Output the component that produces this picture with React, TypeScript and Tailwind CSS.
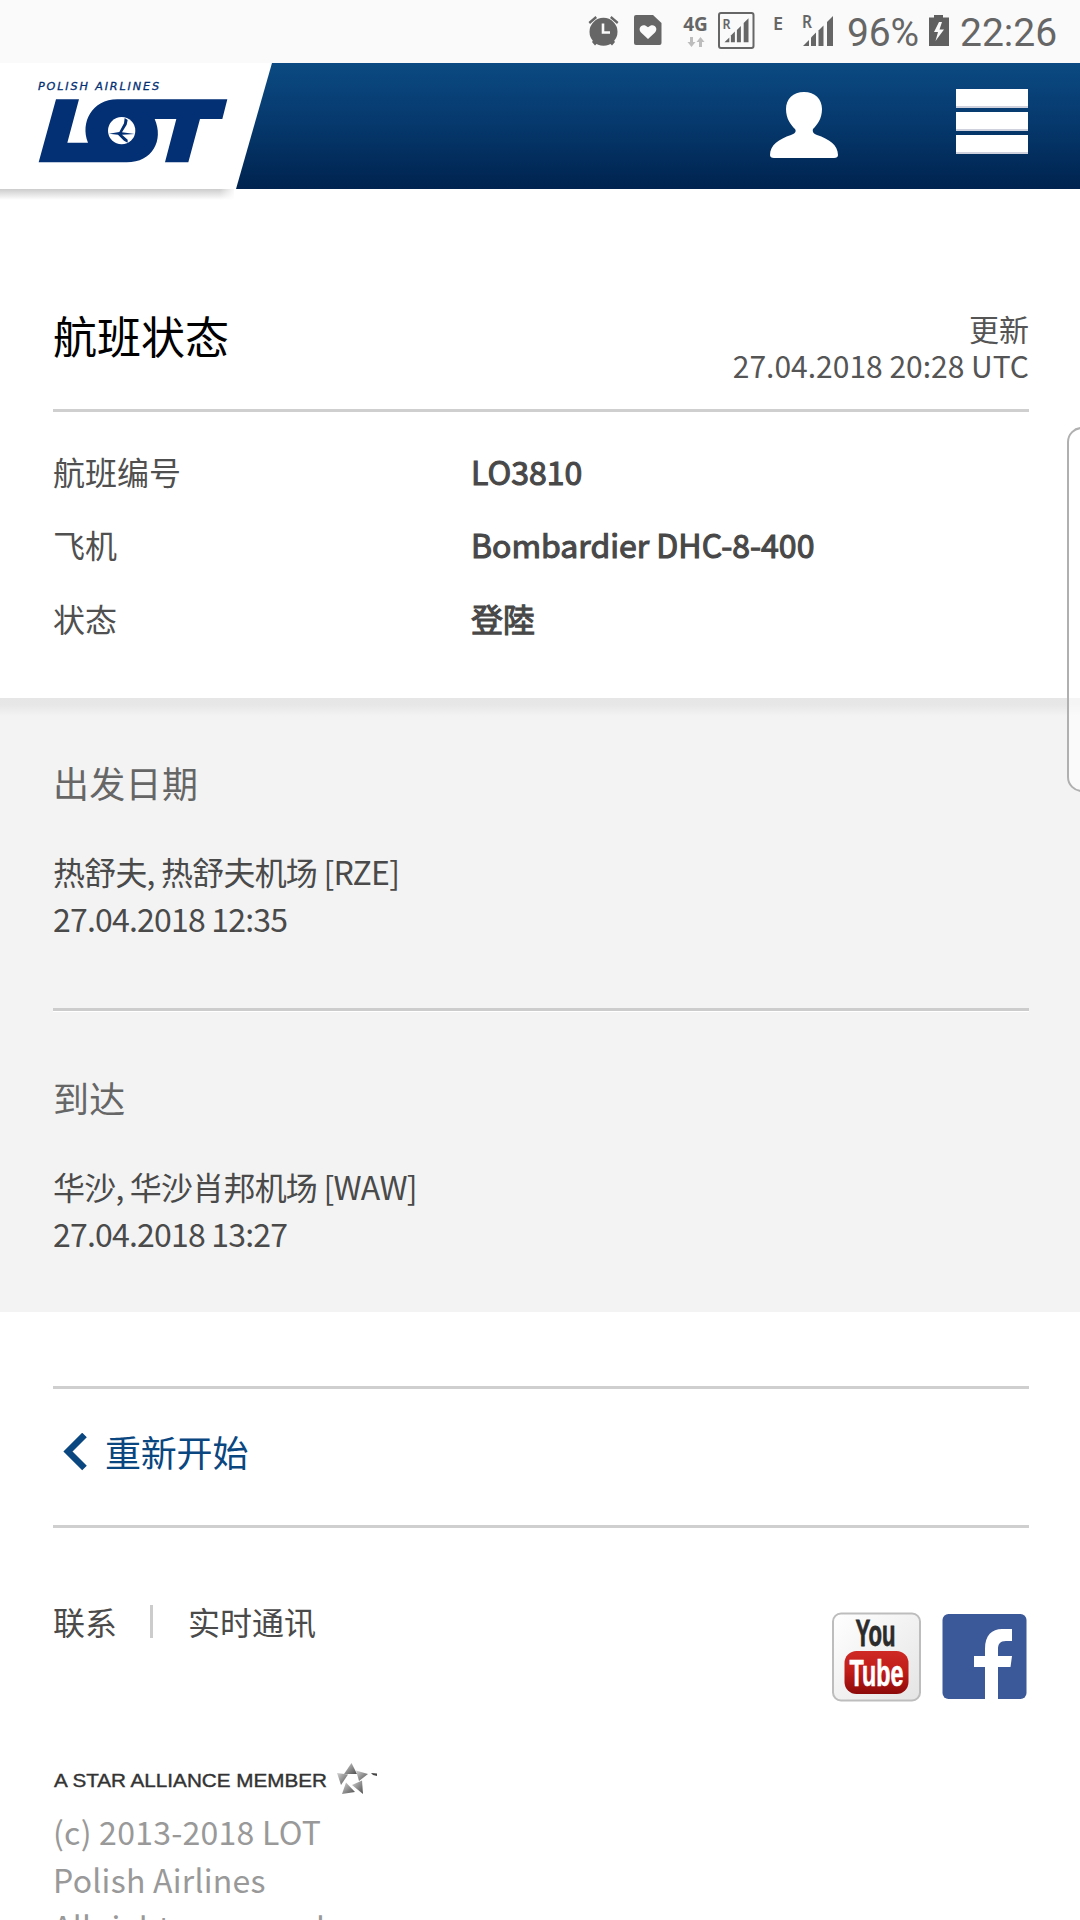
import React from "react";

const CJK = "font-['Noto_Sans_CJK_SC',sans-serif]";

function SignalBars() {
  return (
    <g>
      <path d="M0 31 L6 25 V31 Z" />
      <path d="M8 22.500 L13 17.500 V31 H8 Z" />
      <path d="M15.500 15.500 L20.500 10.500 V31 H15.500 Z" />
      <path d="M24 7 L30 1 V31 H24 Z" />
    </g>
  );
}

function StatusBar() {
  return (
    <div className="flex h-[63px] items-start justify-end bg-[#fafafa] pr-[22px] text-[#666666]">
      <svg className="mt-[14px] h-[33px] w-[33px] shrink-0" viewBox="0 0 33 33" fill="#666666">
        <path d="M1.500 8 L8.500 2 L10 4 L3 10 Z M31.500 8 L24.500 2 L23 4 L30 10 Z" />
        <path d="M5 28 L8 31.500 L10.500 29 L7 25 Z M28 28 L25 31.500 L22.500 29 L26 25 Z" />
        <circle cx="16.500" cy="17.800" r="14" />
        <path d="M16 9.500 V18.500 H23" fill="none" stroke="#fafafa" strokeWidth="2.600" />
      </svg>
      <svg className="mt-[15px] ml-[14px] h-[30px] w-[28px] shrink-0" viewBox="0 0 28 30">
        <path d="M2 0 H19 L27.500 8 V28 Q27.500 30 25.500 30 H2 Q0 30 0 28 V2 Q0 0 2 0 Z" fill="#666666" />
        <path d="M14 24 L7 17.500 C3 13 8.500 7 14 12.300 C19.500 7 25 13 21 17.500 Z" fill="#fafafa" />
      </svg>
      <div className="mt-[13px] ml-[20px] flex w-[27px] flex-col items-center">
        <span className="font-['Noto_Sans',sans-serif] text-[19px] leading-[22px] font-bold">4G</span>
        <svg className="mt-[2px] h-[10px] w-[18px]" viewBox="0 0 18 10" fill="#bdbdbd">
          <path d="M3 0 H6 V5 H8.500 L4.500 10 L0.500 5 H3 Z" />
          <path d="M12 10 H15 V5 H17.500 L13.500 0 L9.500 5 H12 Z" />
        </svg>
      </div>
      <svg className="mt-[12px] ml-[9px] h-[37px] w-[37px] shrink-0 overflow-visible" viewBox="0 0 37 37" fill="#666666">
        <rect x="1" y="1" width="34.500" height="35" rx="2" fill="none" stroke="#666666" strokeWidth="2" />
        <text x="4.500" y="16.500" fontFamily="Noto Sans" fontWeight="600" fontSize="14" textLength="8" lengthAdjust="spacingAndGlyphs">R</text>
        <g transform="translate(6.500 5.500) scale(0.8)">
          <SignalBars />
        </g>
      </svg>
      <span className="mt-[11px] ml-[18px] w-[12px] font-['Noto_Sans',sans-serif] text-[18px] leading-[24px] font-semibold">E</span>
      <svg className="mt-[15px] ml-[17px] h-[32px] w-[33px] shrink-0 overflow-visible" viewBox="0 0 33 32" fill="#666666">
        <text x="0" y="13" fontFamily="Noto Sans" fontWeight="600" fontSize="17" textLength="10" lengthAdjust="spacingAndGlyphs">R</text>
        <g transform="translate(1 0)">
          <SignalBars />
        </g>
      </svg>
      <span className="mt-[10px] ml-[12px] w-[73px] font-[Roboto,sans-serif] text-[39px] leading-[46px] tracking-[-0.2px]">96%</span>
      <svg className="mt-[15px] ml-[9px] h-[31px] w-[20px] shrink-0" viewBox="0 0 20 31">
        <path d="M5 0 H14 V2.500 H20 V31 H0 V2.500 H5 Z" fill="#606060" />
        <path d="M10 7 L5 17 H9 L6.500 26 L15 14.500 H10.500 L13 7 Z" fill="#fafafa" />
      </svg>
      <span className="mt-[10px] ml-[11px] w-[98px] font-[Roboto,sans-serif] text-[39px] leading-[46px]">22:26</span>
    </div>
  );
}

function Logo() {
  return (
    <svg className="block h-[140px] w-[290px]" viewBox="0 0 290 140">
      <defs>
        <linearGradient id="tabShadow" x1="0" y1="0" x2="0" y2="1">
          <stop offset="0" stopColor="#cccccc" />
          <stop offset="1" stopColor="#cccccc" stopOpacity="0" />
        </linearGradient>
        <linearGradient id="tabFade" x1="0" y1="0" x2="1" y2="0">
          <stop offset="0.930" stopColor="#ffffff" stopOpacity="0" />
          <stop offset="1" stopColor="#ffffff" />
        </linearGradient>
      </defs>
      <path d="M0 126 H234 V137 H0 Z" fill="url(#tabShadow)" />
      <path d="M0 126 H236 V138 H0 Z" fill="url(#tabFade)" />
      <path d="M0 0 H272 L236 126 H0 Z" fill="#ffffff" />
      <text x="38" y="27" fontFamily="DejaVu Sans" fontStyle="italic" fontSize="11.200" textLength="121" lengthAdjust="spacing" fill="#032f74" stroke="#032f74" strokeWidth="0.300">
        POLISH AIRLINES
      </text>
      <g transform="translate(0 -3) scale(0.33333)">
        <path
          d="M168 118 H237 L202 248 H264 C240 188 276 118 352 118 H682 L667 177 H600 L565 307 H495 L529 177 H464 C492 240 458 307 380 307 H116 Z"
          fill="#032f74"
        />
        <circle cx="365" cy="212" r="41" fill="#ffffff" />
        <path d="M327 221 L358 216 L372 190 L374 174 L383 180 L380 194 L366 217 L404 222 L366 224 L383 239 V248 L372 242 L354 224 Z" fill="#032f74" />
      </g>
    </svg>
  );
}

function Header() {
  return (
    <header className="flex h-[126px] items-start justify-between bg-linear-to-b from-[#0b4a82] via-[#06386c] to-[#00234f]">
      <Logo />
      <div className="flex items-start pr-[52px]">
        <svg className="mt-[28px] h-[68px] w-[70px]" viewBox="0 0 70 68">
          <path
            d="M35 1 C46 1 53 8 53 18 C53 28 48 34 44 38 C43 41 45 43 48 44 C60 48 69 54 69 64 Q69 67 65 67 H5 Q1 67 1 64 C1 54 10 48 22 44 C25 43 28 41 26 38 C22 34 17 28 17 18 C17 8 24 1 35 1 Z"
            fill="#ffffff"
          />
        </svg>
        <div className="mt-[26px] ml-[117px] flex w-[72px] flex-col gap-[4px]">
          <div className="h-[19px] border-b-[2px] border-[#cfd2dc] bg-white" />
          <div className="h-[19px] border-b-[2px] border-[#cfd2dc] bg-white" />
          <div className="h-[19px] border-b-[2px] border-[#cfd2dc] bg-white" />
        </div>
      </div>
    </header>
  );
}

const details = [
  { label: "航班编号", value: "LO3810" },
  { label: "飞机", value: "Bombardier DHC-8-400" },
  { label: "状态", value: "登陸" },
];

function Leg({ title, place, time }: { title: string; place: string; time: string }) {
  return (
    <section>
      <h2 className="h-[60px] text-[36px] leading-[60px] tracking-[0.3px] text-[#666666]">{title}</h2>
      <div className="mt-[36px] text-[32px] leading-[47px] tracking-[-0.8px] text-[#4a4a4a]">
        <p>{place}</p>
        <p>{time}</p>
      </div>
    </section>
  );
}

function YouTubeIcon() {
  return (
    <svg className="h-[90px] w-[90px] overflow-visible" viewBox="0 0 90 90">
      <defs>
        <linearGradient id="ytTile" x1="0" y1="0" x2="1" y2="1">
          <stop offset="0" stopColor="#ffffff" />
          <stop offset="1" stopColor="#e4e4e4" />
        </linearGradient>
        <linearGradient id="ytRed" x1="0" y1="0" x2="0" y2="1">
          <stop offset="0" stopColor="#cf2a24" />
          <stop offset="0.500" stopColor="#bf1b18" />
          <stop offset="1" stopColor="#8c0a0a" />
        </linearGradient>
      </defs>
      <rect x="1" y="1.500" width="87" height="87" rx="8" fill="url(#ytTile)" stroke="#bdbdbd" strokeWidth="2" />
      <text x="23.500" y="34" fontFamily="Liberation Sans" fontWeight="bold" fontSize="36" textLength="40" lengthAdjust="spacingAndGlyphs" fill="#2b2b2b" stroke="#2b2b2b" strokeWidth="0.800">
        You
      </text>
      <rect x="12.500" y="39" width="64" height="43" rx="12" fill="url(#ytRed)" />
      <text x="17.500" y="73.500" fontFamily="Liberation Sans" fontWeight="bold" fontSize="37" textLength="54" lengthAdjust="spacingAndGlyphs" fill="#ffffff" stroke="#ffffff" strokeWidth="0.600">
        Tube
      </text>
    </svg>
  );
}

function FacebookIcon() {
  return (
    <svg className="h-[86px] w-[86px]" viewBox="0 0 86 86">
      <rect x="0.500" y="0" width="84" height="85" rx="6" fill="#3b5998" />
      <path d="M43 85 V53 H32 V42 H43 V35 C43 21 50 15 60 15 H70 V27 H64 C58 27 56 30 56 35 V42 H70 L68.500 53 H56 V85 Z" fill="#ffffff" />
    </svg>
  );
}

function AllianceStar() {
  return (
    <svg className="h-[32px] w-[42px]" viewBox="0 0 42 32">
      <defs>
        <linearGradient id="star" x1="0" y1="0" x2="1" y2="1">
          <stop offset="0" stopColor="#d4d4d4" />
          <stop offset="1" stopColor="#4d4d4d" />
        </linearGradient>
      </defs>
      <g fill="url(#star)">
        <path d="M14.500 0 L20 11 L7 11 Z" />
        <path d="M19 7.500 L31 11 L22 18 Z" />
        <path d="M25 17.500 L26 31 L15 22 Z" />
        <path d="M9 19.500 L18 29 L5 31 Z" />
        <path d="M0 10 L11 11.500 L4 22 Z" />
      </g>
      <path d="M34 10 L40 10.500 L40 13 L36 12 Z" fill="#444444" />
    </svg>
  );
}

export default function App() {
  return (
    <div className={`relative h-[1920px] w-[1080px] overflow-hidden bg-white ${CJK}`}>
      <StatusBar />
      <Header />

      <main>
        <div className="h-[509px] pt-[121px] pr-[51px] pl-[53px]">
          <div className="flex h-[102px] items-start justify-between border-b-[3px] border-[#cfcfcf]">
            <h1 className="h-[50px] text-[44px] leading-[50px] text-black">航班状态</h1>
            <div className="text-right text-[30px] leading-[37px] text-[#555555]">
              <p>更新</p>
              <p>27.04.2018 20:28 UTC</p>
            </div>
          </div>
          <dl className="mt-[22px]">
            {details.map((d) => (
              <div key={d.label} className="flex h-[73.500px] items-center text-[32px] text-[#505050]">
                <dt className="w-[418px]">{d.label}</dt>
                <dd className="text-[#484848] [-webkit-text-stroke:1.1px_#484848]">{d.value}</dd>
              </div>
            ))}
          </dl>
        </div>

        <div className="h-[614px] bg-[#f3f3f3] bg-[linear-gradient(to_bottom,#e6e6e6_0px,#e7e7e7_7px,#f3f3f3_18px)] pt-[54px] pr-[51px] pl-[53px]">
          <Leg title="出发日期" place="热舒夫, 热舒夫机场 [RZE]" time="27.04.2018 12:35" />
          <div className="mt-[66px] mb-[56px] h-[3px] bg-[#cccccc] shadow-[0_1px_0_#ffffff]" />
          <Leg title="到达" place="华沙, 华沙肖邦机场 [WAW]" time="27.04.2018 13:27" />
        </div>

        <div className="pt-[74px] pr-[51px] pl-[53px]">
          <div className="flex h-[142px] items-center border-y-[3px] border-[#cfcfcf] pl-[10px] text-[#0a467f]">
            <svg className="mt-[-11px] h-[38px] w-[24px]" viewBox="0 0 24 38">
              <path d="M21.500 2 L5 18.500 L21.500 35" fill="none" stroke="#0a467f" strokeWidth="6.500" />
            </svg>
            <span className="mt-[-13px] ml-[18px] text-[36px] tracking-[-0.2px]">重新开始</span>
          </div>
        </div>

        <footer className="pr-[51px] pl-[53px]">
          <div className="flex h-[200px] items-start justify-between pt-[73px]">
            <nav className="flex items-center text-[32px] leading-[40px] text-[#4a4a4a]">
              <a>联系</a>
              <span className="mr-[35px] ml-[33px] h-[33px] w-[3px] bg-[#cccccc]" />
              <a>实时通讯</a>
            </nav>
            <div className="mt-[11px] mr-[1px] flex items-center gap-[20px]">
              <YouTubeIcon />
              <FacebookIcon />
            </div>
          </div>
          <div className="mt-[35px] flex h-[32px] items-center">
            <svg className="h-[32px] w-[284px]" viewBox="0 0 284 32">
              <text x="1" y="24" fontFamily="Liberation Sans" fontSize="19" textLength="273" lengthAdjust="spacingAndGlyphs" fill="#333333" stroke="#333333" strokeWidth="0.400">
                A STAR ALLIANCE MEMBER
              </text>
            </svg>
            <AllianceStar />
          </div>
          <div className="mt-[13px] text-[32px] leading-[47.500px] tracking-[0.250px] text-[#999999]">
            <p>(c) 2013-2018 LOT</p>
            <p>Polish Airlines</p>
            <p>All rights reserved</p>
          </div>
        </footer>
      </main>

      <div className="absolute top-[427px] left-[1067px] h-[365px] w-[30px] rounded-[20px] border-2 border-[#b0b0b0] bg-white/60" />
    </div>
  );
}
